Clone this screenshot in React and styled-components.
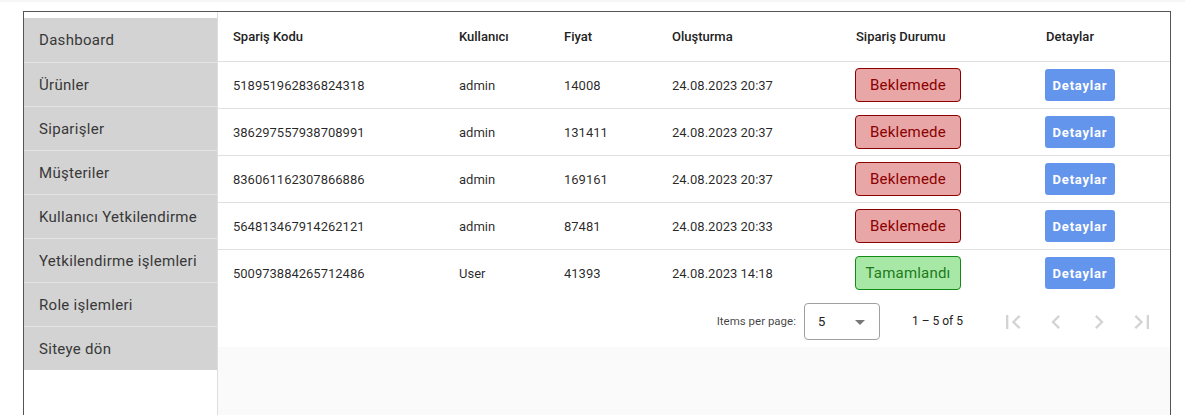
import React from "react";
import styled, { createGlobalStyle } from "styled-components";

const GlobalStyle = createGlobalStyle`
  body {
    margin: 0;
    background: #fff;
    font-family: Roboto, "Liberation Sans", sans-serif;
  }
`;

const menu = [
  "Dashboard",
  "Ürünler",
  "Siparişler",
  "Müşteriler",
  "Kullanıcı Yetkilendirme",
  "Yetkilendirme işlemleri",
  "Role işlemleri",
  "Siteye dön",
];

const orders = [
  { code: "518951962836824318", user: "admin", price: "14008", date: "24.08.2023 20:37", done: false },
  { code: "386297557938708991", user: "admin", price: "131411", date: "24.08.2023 20:37", done: false },
  { code: "836061162307866886", user: "admin", price: "169161", date: "24.08.2023 20:37", done: false },
  { code: "564813467914262121", user: "admin", price: "87481", date: "24.08.2023 20:33", done: false },
  { code: "500973884265712486", user: "User", price: "41393", date: "24.08.2023 14:18", done: true },
];

const columns = [
  { title: "Spariş Kodu", width: 226 },
  { title: "Kullanıcı", width: 105 },
  { title: "Fiyat", width: 108 },
  { title: "Oluşturma", width: 184 },
  { title: "Sipariş Durumu", width: 190 },
  { title: "Detaylar" },
];

const icons = [
  "M18.41 16.59L13.82 12l4.59-4.59L17 6l-6 6 6 6zM6 6h2v12H6z",
  "M15.41 7.41L14 6l-6 6 6 6 1.41-1.41L10.83 12z",
  "M10 6L8.59 7.41 13.17 12l-4.58 4.59L10 18l6-6z",
  "M5.59 7.41L10.18 12l-4.59 4.59L7 18l6-6-6-6zM16 6h2v12h-2z",
];

const App = () => {
  return (
    <>
      <GlobalStyle />
      <TopStrip />
      <Frame>
        <Sidebar>
          {menu.map((m, i) => (
            <MenuItem key={i} first={i === 0}>
              {m}
            </MenuItem>
          ))}
        </Sidebar>
        <Main>
          <Table>
            <colgroup>
              {columns.map((c, i) => (
                <col key={i} style={c.width ? { width: c.width } : undefined} />
              ))}
            </colgroup>
            <thead>
              <tr>
                {columns.map((c, i) => (
                  <Th key={i}>{c.title}</Th>
                ))}
              </tr>
            </thead>
            <tbody>
              {orders.map((o) => (
                <tr key={o.code}>
                  <Td>{o.code}</Td>
                  <Td>{o.user}</Td>
                  <Td>{o.price}</Td>
                  <Td>{o.date}</Td>
                  <Td>
                    <Status done={o.done}>
                      {o.done ? "Tamamlandı" : "Beklemede"}
                    </Status>
                  </Td>
                  <Td>
                    <DetailBtn type="button">Detaylar</DetailBtn>
                  </Td>
                </tr>
              ))}
            </tbody>
          </Table>
          {/* paginator */}
          <Paginator>
            <PageLabel>Items per page:</PageLabel>
            <SizeSelect>
              <span>5</span>
              <Caret />
            </SizeSelect>
            <RangeLabel>1 – 5 of 5</RangeLabel>
            <NavGroup>
              {icons.map((d, i) => (
                <NavBtn key={i} type="button" disabled>
                  <svg width="28" height="28" viewBox="0 0 24 24">
                    <path d={d} fill="currentColor" />
                  </svg>
                </NavBtn>
              ))}
            </NavGroup>
          </Paginator>
          <Filler />
        </Main>
      </Frame>
    </>
  );
};

const TopStrip = styled.div`
  height: 2px;
  background: #f6f6f6;
`;

const Frame = styled.div`
  display: flex;
  margin: 9px 14px 0 23px;
  height: 420px;
  border: 1px solid #555;
  border-bottom: none;
`;

const Sidebar = styled.nav`
  width: 193px;
  flex-shrink: 0;
  padding-top: 6px;
  border-right: 1px solid #dedede;
  align-self: stretch;
`;

const MenuItem = styled.div`
  height: ${(p) => (p.first ? 44 : 43)}px;
  display: flex;
  align-items: center;
  padding-left: 15px;
  background: #d3d3d3;
  border-top: ${(p) => (p.first ? "none" : "1px solid #e4e4e4")};
  font-size: 15px;
  color: #383838;
  letter-spacing: 0.3px;
`;

const Main = styled.div`
  flex: 1;
  display: flex;
  flex-direction: column;
  min-width: 0;
`;

const Table = styled.table`
  width: 100%;
  border-collapse: collapse;
  table-layout: fixed;
  background: #fff;
`;

const Th = styled.th`
  height: 49px;
  padding: 0 0 0 15px;
  text-align: left;
  font-size: 13px;
  font-weight: 500;
  color: #222;
  border-bottom: 1px solid #e0e0e0;
`;

const Td = styled.td`
  height: 46px;
  padding: 0 0 0 15px;
  font-size: 13px;
  color: rgba(0, 0, 0, 0.85);
  border-bottom: 1px solid #e0e0e0;
  tr:last-child > & {
    border-bottom: none;
  }
`;

const Status = styled.div`
  margin-left: -1px;
  width: 106px;
  height: 34px;
  box-sizing: border-box;
  display: flex;
  align-items: center;
  justify-content: center;
  border-radius: 4px;
  font-size: 15px;
  letter-spacing: 0.2px;
  border: 1px solid ${(p) => (p.done ? "#138a13" : "#8b0000")};
  background: ${(p) => (p.done ? "#a8e8a6" : "#e8a6a6")};
  color: ${(p) => (p.done ? "#1c7a1c" : "#8b0000")};
`;

const DetailBtn = styled.button`
  margin-left: -1px;
  width: 70px;
  height: 32px;
  border: none;
  border-radius: 3px;
  background: #6495ed;
  color: #fff;
  font-family: Roboto, "Liberation Sans", sans-serif;
  font-size: 13px;
  font-weight: 700;
  letter-spacing: 0.8px;
  cursor: pointer;
`;

const Paginator = styled.div`
  height: 51px;
  display: flex;
  align-items: center;
  justify-content: flex-end;
  padding-right: 8px;
  background: #fff;
  font-size: 12px;
  color: rgba(0, 0, 0, 0.75);
`;

const PageLabel = styled.span`
  margin-right: 8px;
  margin-top: -2px;
  font-size: 11.5px;
`;

const SizeSelect = styled.div`
  width: 76px;
  height: 37px;
  box-sizing: border-box;
  border: 1px solid #a0a0a0;
  border-radius: 4px;
  display: flex;
  align-items: center;
  justify-content: space-between;
  padding: 0 14px 0 13px;
  font-size: 13px;
  color: #222;
`;

const Caret = styled.span`
  width: 0;
  height: 0;
  border-left: 5px solid transparent;
  border-right: 5px solid transparent;
  border-top: 5px solid #777;
  margin-top: 2px;
`;

const RangeLabel = styled.span`
  margin: -2px 30px 0 32px;
  color: #222;
`;

const NavGroup = styled.div`
  display: flex;
  gap: 3px;
`;

const NavBtn = styled.button`
  width: 40px;
  height: 40px;
  border: none;
  background: transparent;
  padding: 0;
  display: flex;
  align-items: center;
  justify-content: center;
  color: #d4d4d4;
`;

const Filler = styled.div`
  flex: 1;
  background: #fafafa;
`;

export default App;
